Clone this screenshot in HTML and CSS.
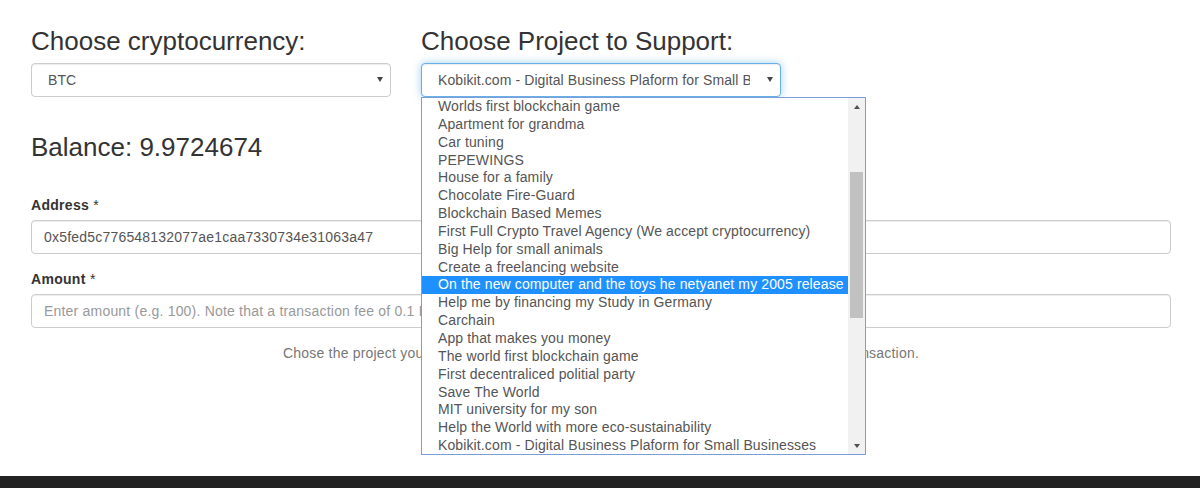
FILE: index.html
```html
<!DOCTYPE html>
<html lang="en">
<head>
<meta charset="utf-8">
<title>Support a project</title>
<link rel="stylesheet" href="styles.css">
</head>
<body>
<main class="container">
  <div class="row-top">
    <div class="col">
      <h3 class="heading">Choose cryptocurrency:</h3>
      <div class="select"><span class="select-text">BTC</span><span class="caret"></span></div>
    </div>
    <div class="col">
      <h3 class="heading">Choose Project to Support:</h3>
      <div class="select-wrap">
        <div class="select select-focus"><span class="select-text">Kobikit.com - Digital Business Plaform for Small Businesses</span><span class="caret"></span></div>
        <div class="dropdown">
          <ul class="options">
            <li>Worlds first blockchain game</li>
            <li>Apartment for grandma</li>
            <li>Car tuning</li>
            <li>PEPEWINGS</li>
            <li>House for a family</li>
            <li>Chocolate Fire-Guard</li>
            <li>Blockchain Based Memes</li>
            <li>First Full Crypto Travel Agency (We accept cryptocurrency)</li>
            <li>Big Help for small animals</li>
            <li>Create a freelancing website</li>
            <li class="selected">On the new computer and the toys he netyanet my 2005 release</li>
            <li>Help me by financing my Study in Germany</li>
            <li>Carchain</li>
            <li>App that makes you money</li>
            <li>The world first blockchain game</li>
            <li>First decentraliced politial party</li>
            <li>Save The World</li>
            <li>MIT university for my son</li>
            <li>Help the World with more eco-sustainability</li>
            <li>Kobikit.com - Digital Business Plaform for Small Businesses</li>
          </ul>
          <div class="scrollbar">
            <div class="sb-btn"><span class="sb-up"></span></div>
            <div class="sb-track"><div class="sb-thumb"></div></div>
            <div class="sb-btn"><span class="sb-down"></span></div>
          </div>
        </div>
      </div>
    </div>
  </div>

  <h3 class="balance">Balance: 9.9724674</h3>

  <div class="form-group">
    <label class="label">Address <span class="req">*</span></label>
    <div class="input">0x5fed5c776548132077ae1caa7330734e31063a47</div>
  </div>
  <div class="form-group">
    <label class="label">Amount <span class="req">*</span></label>
    <div class="input placeholder">Enter amount (e.g. 100). Note that a transaction fee of 0.1 BTC will be deducted from the amount.</div>
  </div>

  <p class="help">Chose the project you want to support, enter the amount and press Send to confirm the transaction.</p>
</main>
<footer class="footer"></footer>
</body>
</html>
```

FILE: styles.css
```css
* { box-sizing: border-box; }

html, body {
  margin: 0;
  padding: 0;
}

body {
  font-family: "Liberation Sans", Arial, Helvetica, sans-serif;
  font-size: 14px;
  line-height: 20px;
  letter-spacing: 0.2px;
  color: #333;
  background: #fff;
  min-height: 100vh;
  display: flex;
  flex-direction: column;
  overflow: hidden;
}

.container {
  padding: 27px 29px 0 31px;
}

.row-top {
  display: grid;
  grid-template-columns: 390px 390px;
}

.col {
  padding-right: 30px;
}

.heading {
  margin: 0 0 8px;
  font-size: 26px;
  line-height: 28px;
  font-weight: 400;
  letter-spacing: 0;
  color: #333;
}

.select-wrap {
  position: relative;
}

.select {
  height: 34px;
  border: 1px solid #ccc;
  border-radius: 4px;
  display: flex;
  align-items: center;
  padding: 0 7px 0 16px;
  color: #555;
  font-size: 14px;
  letter-spacing: 0.1px;
  background: #fff;
  box-shadow: inset 0 1px 1px rgba(0,0,0,.075);
}

.select-text {
  flex: 1;
  white-space: nowrap;
  overflow: hidden;
  margin-right: 17px;
}

.select-focus {
  border-color: #66afe9;
  box-shadow: inset 0 1px 1px rgba(0,0,0,.075), 0 0 8px rgba(102,175,233,.6);
}

.caret {
  width: 0;
  height: 0;
  border-left: 3.5px solid transparent;
  border-right: 3.5px solid transparent;
  border-top: 5px solid #444;
  margin-top: -1px;
  flex: none;
}

.dropdown {
  position: absolute;
  top: 100%;
  left: 0;
  width: 445px;
  height: 358px;
  border: 1px solid #7b9ed6;
  background: #fff;
  display: flex;
  z-index: 10;
}

.options {
  list-style: none;
  margin: 0;
  padding: 0;
  flex: 1;
  overflow: hidden;
  font-size: 14px;
  line-height: 17.84px;
  letter-spacing: 0.12px;
  color: #555;
}

.options li {
  padding-left: 16px;
  white-space: nowrap;
}

.options .selected {
  background: #1e90ff;
  color: #fff;
}

.scrollbar {
  width: 17px;
  flex: none;
  background: #f1f1f1;
  display: flex;
  flex-direction: column;
}

.sb-btn {
  height: 17px;
  display: flex;
  align-items: center;
  justify-content: center;
  flex: none;
}

.sb-up, .sb-down {
  width: 0;
  height: 0;
  border-left: 3.5px solid transparent;
  border-right: 3.5px solid transparent;
}

.sb-up { border-bottom: 4px solid #505050; }
.sb-down { border-top: 4px solid #505050; }

.sb-track {
  flex: 1;
  padding: 57px 2px 0;
}

.sb-thumb {
  height: 146px;
  background: #c1c1c1;
}

.balance {
  margin: 36px 0 34px;
  font-size: 26px;
  line-height: 28px;
  font-weight: 400;
  letter-spacing: 0;
  color: #333;
}

.form-group {
  margin-bottom: 15px;
}

.label {
  display: block;
  font-weight: 700;
  letter-spacing: 0.3px;
  margin-bottom: 5px;
}

.req {
  font-weight: 400;
}

.input {
  height: 34px;
  border: 1px solid #ccc;
  border-radius: 4px;
  padding: 6px 12px;
  color: #555;
  white-space: nowrap;
  overflow: hidden;
  box-shadow: inset 0 1px 1px rgba(0,0,0,.075);
}

.placeholder { color: #999; }

.help {
  margin: 0;
  text-align: center;
  color: #777;
}

.footer {
  margin-top: auto;
  height: 12px;
  background: #222;
}
```
